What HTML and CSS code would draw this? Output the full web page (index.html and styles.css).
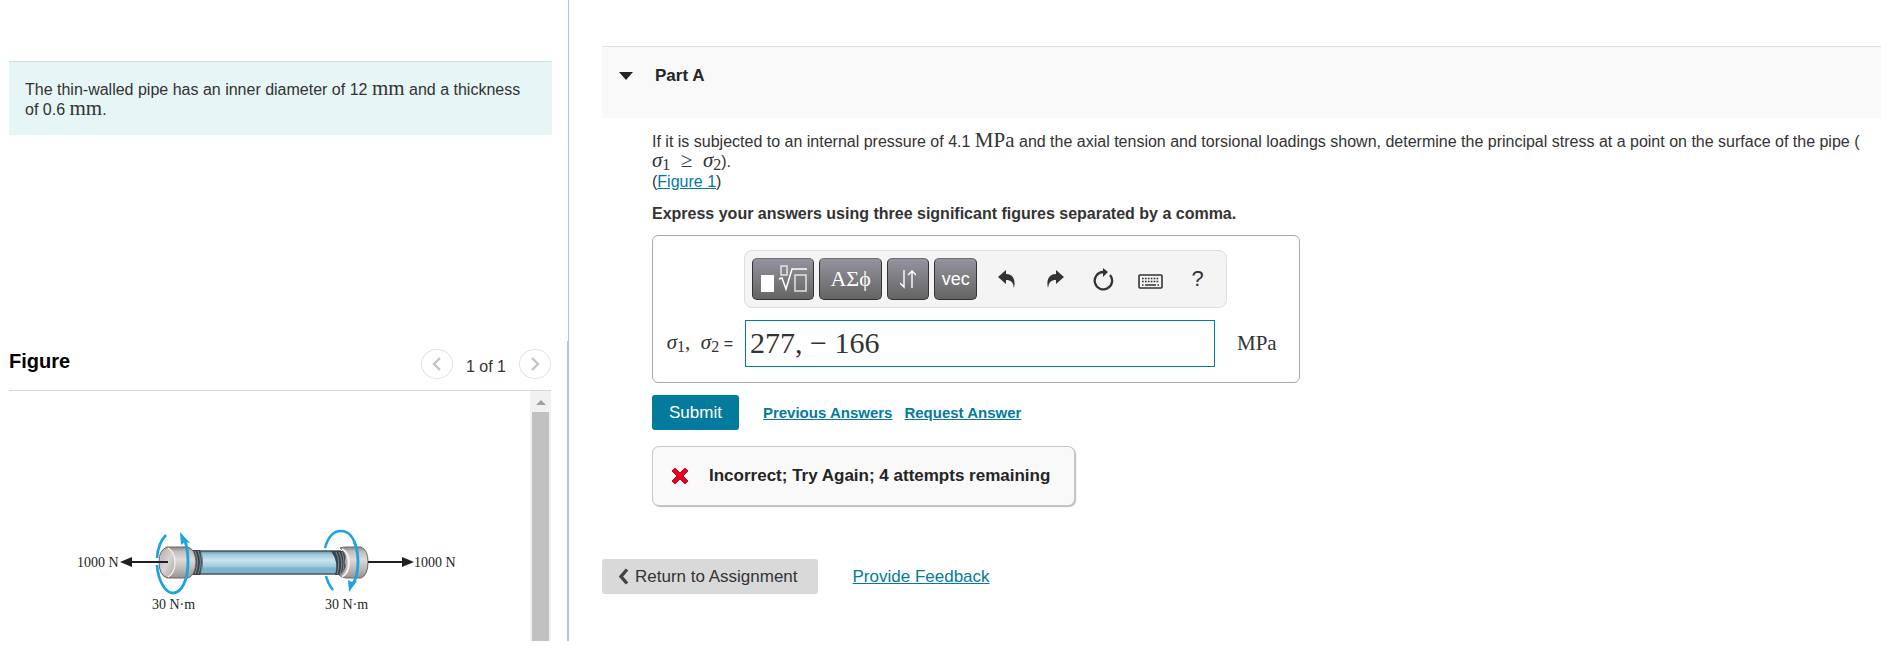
FILE: index.html
```
<!DOCTYPE html>
<html lang="en">
<head>
    <meta charset="UTF-8">
    <meta name="viewport" content="width=device-width, initial-scale=1.0">
    <title>Part A</title>
    <link rel="stylesheet" href="styles.css">
</head>
<body>
    <div class="page">
        <aside class="sidebar">
            <div class="problem">
                The thin-walled pipe has an inner diameter of 12 <span class="math">mm</span> and a thickness of 0.6 <span class="math">mm</span>.
            </div>

            <section class="figure-panel">
                <div class="figure-header">
                    <h2>Figure</h2>
                    <div class="pager">
                        <button type="button" class="pager-btn" aria-label="Previous figure">
                            <svg width="10" height="16" viewBox="0 0 10 16"><path d="M8 2 L2 8 L8 14" fill="none" stroke="#c4c4c4" stroke-width="2.4"/></svg>
                        </button>
                        <span class="pager-count">1 of 1</span>
                        <button type="button" class="pager-btn" aria-label="Next figure">
                            <svg width="10" height="16" viewBox="0 0 10 16"><path d="M2 2 L8 8 L2 14" fill="none" stroke="#c4c4c4" stroke-width="2.4"/></svg>
                        </button>
                    </div>
                </div>
                <div class="figure-body">
                    <div class="figure-view">
                        <svg class="pipe" width="521" height="250" viewBox="0 0 521 250">
                            <defs>
                                <linearGradient id="tube" x1="0" y1="0" x2="0" y2="1">
                                    <stop offset="0" stop-color="#5f8fa6"/>
                                    <stop offset="0.15" stop-color="#9cc8dc"/>
                                    <stop offset="0.4" stop-color="#cde5ef"/>
                                    <stop offset="0.68" stop-color="#9cc9dd"/>
                                    <stop offset="0.74" stop-color="#7cb4cf"/>
                                    <stop offset="1" stop-color="#7fb3cc"/>
                                </linearGradient>
                                <linearGradient id="cap" x1="0" y1="0" x2="0" y2="1">
                                    <stop offset="0" stop-color="#8d8888"/>
                                    <stop offset="0.15" stop-color="#c3bebd"/>
                                    <stop offset="0.4" stop-color="#dedad9"/>
                                    <stop offset="0.75" stop-color="#b9b4b2"/>
                                    <stop offset="1" stop-color="#989291"/>
                                </linearGradient>
                                <linearGradient id="face" x1="0" y1="0" x2="1" y2="1">
                                    <stop offset="0" stop-color="#b3aead"/>
                                    <stop offset="0.5" stop-color="#d8d4d3"/>
                                    <stop offset="1" stop-color="#a8a2a1"/>
                                </linearGradient>
                            </defs>

                            <!-- torque arcs behind the caps -->
                            <g fill="none" stroke="#1ba4e2" stroke-width="2.6">
                                <path d="M157 144 Q149 152 148 167"/>
                                <path d="M316 157 C319 146 325 140 332 140 C338 140 344 144 347 156"/>
                                <path d="M317 185 Q319 193 324 199"/>
                            </g>

                            <!-- tube -->
                            <rect x="190" y="160" width="138" height="23" fill="url(#tube)"/>
                            <path d="M190 160 H332 M190 183 H332" stroke="#48555c" stroke-width="1.4"/>

                            <!-- threads -->
                            <path d="M184 159 H191 Q197 171 191 184 H184 Z" fill="#39444a"/>
                            <path d="M186 160 Q191 171 186 183 M189 160 Q194 171 189 183 M192 162 Q195 171 192 181" fill="none" stroke="#8d9ba2" stroke-width="0.8"/>
                            <path d="M322 160 H336 V184 H326 Q330 171 322 160 Z" fill="#39444a"/>
                            <path d="M327 161 Q332 171 328 183 M330 161 Q335 171 331 183 M333 161 Q337 171 333 183" fill="none" stroke="#8d9ba2" stroke-width="0.8"/>

                            <!-- left cap -->
                            <path d="M158 156 H179 Q186 158 187 171 Q186 185 179 187 H158 Q150 184 150 171 Q150 159 158 156 Z" fill="url(#cap)" stroke="#6b6666" stroke-width="1"/>
                            <path d="M158 157 Q166 160 166 171 Q166 183 158 186 Q151 183 151 171 Q151 160 158 157 Z" fill="url(#face)"/>
                            <path d="M159 157 Q166 161 166 171 Q166 182 159 186" fill="none" stroke="#f3f1f1" stroke-width="1.3"/>

                            <!-- right cap -->
                            <path d="M331 157 Q334 156 338 156 H352 Q359 159 359 171 Q359 184 352 187 H337 Q333 187 330 184 Q337 180 337 171 Q337 161 331 157 Z" fill="url(#cap)" stroke="#6b6666" stroke-width="1"/>
                            <path d="M333 158 Q340 162 340 171 Q340 182 333 186" fill="none" stroke="#f3f1f1" stroke-width="2"/>

                            <!-- axial forces -->
                            <path d="M120 171 H159 M359 171 H395" stroke="#231f20" stroke-width="2"/>
                            <path d="M111 171 L123 166 V176 Z M405 171 L393 166 V176 Z" fill="#231f20"/>

                            <!-- torque arcs in front -->
                            <g fill="none" stroke="#1ba4e2" stroke-width="2.8">
                                <path d="M148 174 C149 189 156 202 164 202 C173 202 179 188 179 171 Q179 159 176 150"/>
                                <path d="M345 150 Q349 159 349 171 Q349 184 344 193"/>
                            </g>
                            <path d="M171 141 L181 152 L176 151 L172 154 Z M340 201 L339 189 L343 191 L348 190 Z" fill="#1ba4e2"/>

                            <g class="pipe-label">
                                <text x="68" y="176">1000 N</text>
                                <text x="405" y="176">1000 N</text>
                                <text x="143" y="218">30 N·m</text>
                                <text x="316" y="218">30 N·m</text>
                            </g>
                        </svg>
                    </div>
                    <div class="scrollbar">
                        <span class="scroll-arrow"></span>
                        <span class="scroll-thumb"></span>
                    </div>
                </div>
            </section>
        </aside>

        <main class="content">
            <div class="part-header">
                <span class="caret"></span>
                <h1>Part A</h1>
            </div>

            <div class="part-body">
                <p class="question">
                    If it is subjected to an internal pressure of 4.1 <span class="math">MPa</span> and the axial tension and torsional loadings shown, determine the principal stress at a point on the surface of the pipe (<br>
                    <span class="math"><i>σ</i><sub>1</sub> &nbsp;≥&nbsp; <i>σ</i><sub>2</sub></span>).<br>
                    (<a href="#figure">Figure 1</a>)
                </p>
                <p class="instruction">Express your answers using three significant figures separated by a comma.</p>

                <form class="answer">
                    <div class="toolbar">
                        <button type="button" class="tool tool-wide" aria-label="Templates">
                            <svg width="48" height="28" viewBox="0 0 48 28">
                                <rect x="2" y="10" width="13" height="17" fill="#fff"/>
                                <g fill="none" stroke="#e4e4e4" stroke-width="1.5">
                                    <rect x="22" y="1" width="6" height="9"/>
                                    <rect x="36" y="10" width="11" height="16"/>
                                    <path d="M20 14 L23 13 L27 24 L33 4 H48" stroke="#fff"/>
                                </g>
                            </svg>
                        </button>
                        <button type="button" class="tool tool-wide tool-greek">ΑΣϕ</button>
                        <button type="button" class="tool" aria-label="Arrows">
                            <svg width="16" height="20" viewBox="0 0 16 20"><path d="M4 1 V18 M0 14 L4 18 V15 M12 19 V2 M8 6 L12 2 L16 6" fill="none" stroke="#fff" stroke-width="1.4"/></svg>
                        </button>
                        <button type="button" class="tool">vec</button>
                        <button type="button" class="icon-btn" aria-label="Undo">
                            <svg width="18" height="20" viewBox="0 0 18 20"><path d="M0 8 L8 1 V5 C15 5 18 11 16 19 C15 13 13 11 8 11 V15 Z" fill="#333"/></svg>
                        </button>
                        <button type="button" class="icon-btn" aria-label="Redo">
                            <svg width="18" height="20" viewBox="0 0 18 20"><path d="M18 8 L10 1 V5 C3 5 0 11 2 19 C3 13 5 11 10 11 V15 Z" fill="#333"/></svg>
                        </button>
                        <button type="button" class="icon-btn" aria-label="Reset">
                            <svg width="22" height="24" viewBox="0 0 22 24"><path d="M11 5 A8.7 8.7 0 1 0 18 8" fill="none" stroke="#333" stroke-width="2.3"/><path d="M11 1 L16 5 L11 10 Z" fill="#333"/></svg>
                        </button>
                        <button type="button" class="icon-btn" aria-label="Keyboard">
                            <svg class="keyboard" width="25" height="15" viewBox="0 0 25 15"><rect x="1" y="1" width="23" height="13" rx="1" fill="none" stroke="#333" stroke-width="1.6"/><path d="M4 4.5 H21 M4 7.5 H21" stroke="#333" stroke-width="1.5" stroke-dasharray="1.7 1.2"/><path d="M4 11 H5.5 M7 11 H18 M19.5 11 H21" stroke="#333" stroke-width="1.5"/></svg>
                        </button>
                        <button type="button" class="icon-btn">?</button>
                    </div>
                    <label class="answer-label" for="answer"><span class="math"><i>σ</i><sub>1</sub>, &nbsp;<i>σ</i><sub>2</sub></span> =</label>
                    <input class="answer-input" type="text" id="answer" name="answer" value="277, − 166">
                    <span class="answer-unit math">MPa</span>
                </form>

                <div class="actions">
                    <button type="submit" class="submit">Submit</button>
                    <a href="#previous">Previous Answers</a>
                    <a href="#request">Request Answer</a>
                </div>

                <div class="feedback">
                    <svg width="18" height="18" viewBox="0 0 18 18"><path d="M4 1 L9 6 L14 1 L17 4 L12 9 L17 14 L14 17 L9 12 L4 17 L1 14 L6 9 L1 4 Z" fill="#df0024" stroke="#df0024" stroke-linejoin="round"/></svg>
                    <span>Incorrect; Try Again; 4 attempts remaining</span>
                </div>
            </div>

            <div class="page-links">
                <button type="button" class="return">
                    <svg width="11" height="17" viewBox="0 0 11 17"><path d="M9 1.5 L3 8.5 L9 15.5" fill="none" stroke="#444" stroke-width="3.4"/></svg>
                    Return to Assignment
                </button>
                <a href="#feedback">Provide Feedback</a>
            </div>
        </main>
    </div>
</body>
</html>
```
FILE: styles.css
```
* {
    box-sizing: border-box;
}
body {
    margin: 0;
    font-family: "Liberation Sans", Arial, sans-serif;
    font-size: 16px;
    line-height: 20px;
    color: #333;
    background-color: #fff;
}
h1, h2, p {
    margin: 0;
}
a {
    color: #047a9c;
}
button {
    font-family: inherit;
    padding: 0;
    border: none;
    cursor: pointer;
}
.page {
    display: flex;
    min-height: 100vh;
    padding-bottom: 7px;
}
.math {
    font-family: "Liberation Serif", "Times New Roman", serif;
    font-size: 21px;
    line-height: 16px;
    white-space: nowrap;
}
.math sub {
    font-size: 16px;
    line-height: 0;
    vertical-align: -3px;
}

/* left column */
.sidebar {
    display: flex;
    flex-direction: column;
    flex: 0 0 30%;
    padding-top: 61px;
    border-right: 1px solid #b4c6dd;
}
.problem {
    margin: 0 16px 0 9px;
    padding: 18px 16px 15px;
    background-color: #e6f5f5;
    border-top: 1px solid #d3dfe2;
}
.figure-panel {
    display: flex;
    flex-direction: column;
    flex: 1;
    margin-top: 206px;
    padding: 0 16px 0 9px;
    border-right: 1px solid #b4c6dd;
}
.figure-header {
    display: flex;
    justify-content: space-between;
    padding: 8px 0 11px;
    border-bottom: 1px solid #d8d8d8;
}
.figure-header h2 {
    padding-top: 2px;
    font-size: 20px;
    color: #000;
}
.pager {
    display: flex;
    align-items: center;
    gap: 13px;
}
.pager-count {
    padding-top: 5px;
}
.pager-btn {
    display: flex;
    align-items: center;
    justify-content: center;
    width: 32px;
    height: 30px;
    background-color: #fff;
    border: 1px solid #e2e2e2;
    border-radius: 50%;
}
.figure-body {
    display: flex;
    flex: 1;
}
.figure-view {
    flex: 1;
    min-width: 0;
    overflow: hidden;
}
.pipe {
    display: block;
}
.pipe-label {
    font-family: "Liberation Serif", "Times New Roman", serif;
    font-size: 14px;
    fill: #231f20;
}
.scrollbar {
    display: flex;
    flex-direction: column;
    align-items: center;
    gap: 7px;
    width: 21px;
    padding-top: 9px;
    background-color: #f1f1f1;
}
.scroll-arrow {
    border: 5px solid transparent;
    border-top: none;
    border-bottom-color: #a0a0a0;
}
.scroll-thumb {
    flex: 1;
    width: 17px;
    background-color: #c1c1c1;
}

/* right column */
.content {
    flex: 1;
    min-width: 0;
    padding: 46px 14px 0 33px;
}
.part-header {
    display: flex;
    align-items: center;
    gap: 22px;
    height: 72px;
    padding: 0 17px 14px;
    background-color: #f9f9f9;
    border-top: 1px solid #ddd;
}
.part-header h1 {
    font-size: 17px;
    color: #252525;
}
.caret {
    border: 7px solid transparent;
    border-top: 8px solid #252525;
    border-bottom: none;
}
.part-body {
    padding: 14px 0 0 50px;
}
.instruction {
    margin: 12px 0 11px;
    font-weight: bold;
}
.answer {
    display: grid;
    grid-template-columns: 79px 483px auto;
    align-items: center;
    row-gap: 12px;
    width: fit-content;
    padding: 14px 22px 15px 12px;
    border: 1px solid #aaa;
    border-radius: 6px;
}
.toolbar {
    grid-column: 2 / 4;
    display: flex;
    gap: 5px;
    width: 483px;
    padding: 7px;
    background-color: #f4f4f4;
    border: 1px solid #ddd;
    border-radius: 8px;
}
.tool,
.icon-btn {
    display: flex;
    align-items: center;
    justify-content: center;
    width: 43px;
    height: 42px;
}
.tool {
    font-size: 18px;
    color: #fff;
    background: linear-gradient(#95939e, #646464);
    border: 1px solid #333;
    border-top-color: #707070;
    border-radius: 5px;
}
.tool-wide {
    width: 63px;
}
.tool-greek {
    font-family: "Liberation Serif", "Times New Roman", serif;
    font-size: 22px;
}
.icon-btn {
    font-size: 22px;
    color: #333;
    background: none;
}
.tool + .icon-btn {
    margin-left: 4px;
}
.keyboard {
    margin-top: 5px;
}
.answer-label {
    grid-column: 1;
    padding-right: 11px;
    text-align: right;
    white-space: nowrap;
}
.answer-input {
    width: 470px;
    height: 47px;
    margin-left: 1px;
    padding: 0 4px 2px;
    font-family: "Liberation Serif", "Times New Roman", serif;
    font-size: 30px;
    color: #333;
    border: 1px solid #047a9c;
}
.answer-unit {
    padding: 0 0 2px 10px;
}
.actions {
    display: flex;
    align-items: center;
    gap: 12px;
    margin-top: 12px;
    font-size: 15px;
    font-weight: bold;
}
.submit {
    height: 35px;
    margin-right: 12px;
    padding: 0 17px;
    font-size: 17px;
    color: #fff;
    background-color: #047a9c;
    border-radius: 3px;
}
.feedback {
    display: flex;
    align-items: center;
    gap: 20px;
    width: fit-content;
    height: 60px;
    margin-top: 16px;
    padding: 0 24px 0 18px;
    font-size: 17px;
    font-weight: bold;
    color: #252525;
    background-color: #f9f9f9;
    border: 1px solid #c7c7c7;
    border-radius: 7px;
    box-shadow: 1px 1px 1px #bbb;
}
.page-links {
    display: flex;
    align-items: center;
    gap: 35px;
    margin-top: 53px;
    font-size: 17px;
}
.return {
    display: flex;
    align-items: center;
    gap: 6px;
    height: 35px;
    padding: 0 20px 0 16px;
    font-size: 17px;
    color: #333;
    background-color: #d9d9d9;
    border-radius: 3px;
}
```
